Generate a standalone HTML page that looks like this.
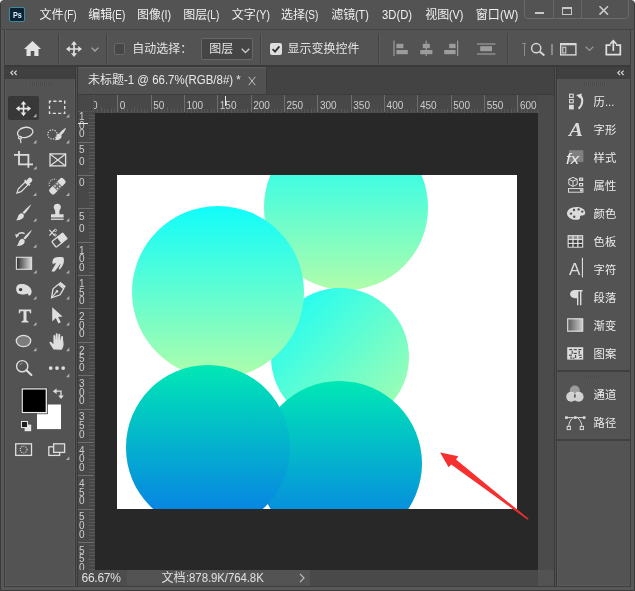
<!DOCTYPE html>
<html><head><meta charset="utf-8"><title>ps</title>
<style>
html,body{margin:0;padding:0;}
body{width:635px;height:591px;overflow:hidden;background:#535353;position:relative;font-family:"Liberation Sans",sans-serif;}
div,svg{position:absolute;box-sizing:border-box;}
.lb{white-space:nowrap;display:flex;align-items:center;}
.lb span.cj{font-family:"Liberation Sans","Noto Sans CJK SC",sans-serif;overflow:visible;}
.lb span{display:block;flex:none;}
.ab{position:absolute;}
</style></head><body>
<div id="root" style="left:0;top:0;width:635px;height:591px;will-change:transform;">
<div style="left:0;top:0;width:635px;height:591px;background:#585858;"></div><div style="left:0;top:3px;width:1px;height:588px;background:#3a3a3a;"></div><div style="left:634px;top:3px;width:1px;height:588px;background:#3a3a3a;"></div><div style="left:0;top:590px;width:635px;height:1px;background:#3c3c3c;"></div><div style="left:5px;top:0;width:625px;height:586px;background:#535353;"></div><div style="left:1px;top:0;width:633px;height:30px;background:#535353;"></div><div style="left:4px;top:30px;width:1px;height:557px;background:#3e3e3e;"></div><div style="left:630px;top:30px;width:1px;height:557px;background:#3e3e3e;"></div><div style="left:4px;top:586px;width:627px;height:1px;background:#3e3e3e;"></div><div style="left:5px;top:30px;width:1px;height:556px;background:#5b5b5b;"></div><div style="left:5px;top:585px;width:625px;height:1px;background:#5b5b5b;"></div><svg style="left:0;top:0;" width="4" height="4" viewBox="0 0 4 4"><path d="M0 0 L3.4 0 C1.4 0.4 0.4 1.4 0 3.4 Z" fill="#f4f4f4"/></svg><svg style="left:631px;top:0;" width="4" height="4" viewBox="0 0 4 4"><path d="M4 0 L0.6 0 C2.6 0.4 3.6 1.4 4 3.4 Z" fill="#f4f4f4"/></svg><div style="left:0;top:29px;width:635px;height:1px;background:#454545;"></div><div style="left:9px;top:7px;width:16px;height:15px;background:#0a2233;border:1px solid #3d8aa0;border-radius:2px;"></div><div class="lb" style="left:12.8px;top:8px;height:13px;line-height:13px;font-size:9.5px;font-weight:bold;color:#d6eefc;"><span style="transform:scaleX(0.76);transform-origin:0 50%;">Ps</span></div><div class="lb" style="left:39.5px;top:7.2px;height:16px;line-height:16px;font-size:12px;color:#efefef;"><span class="cj" style="width:24px;">文件</span><span style="transform:scaleX(0.82);transform-origin:0 50%;">(F)</span></div><div class="lb" style="left:88.3px;top:7.2px;height:16px;line-height:16px;font-size:12px;color:#efefef;"><span class="cj" style="width:24px;">编辑</span><span style="transform:scaleX(0.83);transform-origin:0 50%;">(E)</span></div><div class="lb" style="left:137px;top:7.2px;height:16px;line-height:16px;font-size:12px;color:#efefef;"><span class="cj" style="width:24px;">图像</span><span style="transform:scaleX(0.9);transform-origin:0 50%;">(I)</span></div><div class="lb" style="left:183.3px;top:7.2px;height:16px;line-height:16px;font-size:12px;color:#efefef;"><span class="cj" style="width:24px;">图层</span><span style="transform:scaleX(0.84);transform-origin:0 50%;">(L)</span></div><div class="lb" style="left:231.8px;top:7.2px;height:16px;line-height:16px;font-size:12px;color:#efefef;"><span class="cj" style="width:24px;">文字</span><span style="transform:scaleX(0.87);transform-origin:0 50%;">(Y)</span></div><div class="lb" style="left:281px;top:7.2px;height:16px;line-height:16px;font-size:12px;color:#efefef;"><span class="cj" style="width:24px;">选择</span><span style="transform:scaleX(0.83);transform-origin:0 50%;">(S)</span></div><div class="lb" style="left:331.3px;top:7.2px;height:16px;line-height:16px;font-size:12px;color:#efefef;"><span class="cj" style="width:24px;">滤镜</span><span style="transform:scaleX(0.9);transform-origin:0 50%;">(T)</span></div><div class="lb" style="left:381.6px;top:7.2px;height:16px;line-height:16px;font-size:12px;color:#efefef;"><span style="transform:scaleX(0.94);transform-origin:0 50%;">3D(D)</span></div><div class="lb" style="left:425.3px;top:7.2px;height:16px;line-height:16px;font-size:12px;color:#efefef;"><span class="cj" style="width:24px;">视图</span><span style="transform:scaleX(0.9);transform-origin:0 50%;">(V)</span></div><div class="lb" style="left:475.8px;top:7.2px;height:16px;line-height:16px;font-size:12px;color:#efefef;"><span class="cj" style="width:24px;">窗口</span><span style="transform:scaleX(0.95);transform-origin:0 50%;">(W)</span></div><div style="left:524px;top:-2px;width:105px;height:21px;border:1px solid #6a6a6a;border-radius:0 0 4px 4px;background:#535353;"></div><div style="left:553px;top:0;width:1px;height:18px;background:#676767;"></div><div style="left:581px;top:0;width:1px;height:18px;background:#676767;"></div><div style="left:535px;top:11.5px;width:9px;height:2px;background:#c8c8c8;"></div><div style="left:562px;top:7px;width:10px;height:8px;border:1.5px solid #c8c8c8;border-top-width:2px;"></div><svg style="left:598px;top:5px;" width="12" height="11" viewBox="0 0 12 11"><path d="M1.5 1.2 L10 9.6 M10 1.2 L1.5 9.6" stroke="#c8c8c8" stroke-width="1.6" fill="none"/></svg><div style="left:9px;top:35px;width:2px;height:28px;background:repeating-linear-gradient(#4a4a4a 0 1px,#5c5c5c 1px 2px);opacity:.8;"></div><div style="left:58px;top:34px;width:1px;height:29px;background:#434343;"></div><div style="left:59px;top:34px;width:1px;height:29px;background:#5b5b5b;"></div><div style="left:105.5px;top:34px;width:1px;height:29px;background:#434343;"></div><div style="left:106.5px;top:34px;width:1px;height:29px;background:#5b5b5b;"></div><div style="left:260px;top:34px;width:1px;height:29px;background:#434343;"></div><div style="left:261px;top:34px;width:1px;height:29px;background:#5b5b5b;"></div><div style="left:378px;top:34px;width:1px;height:29px;background:#434343;"></div><div style="left:379px;top:34px;width:1px;height:29px;background:#5b5b5b;"></div><div style="left:507px;top:34px;width:1px;height:29px;background:#434343;"></div><div style="left:508px;top:34px;width:1px;height:29px;background:#5b5b5b;"></div><svg style="left:24px;top:41px;" width="17" height="15" viewBox="0 0 17 15"><path d="M8.5 0 L17 8 L14.5 8 L14.5 15 L10.3 15 L10.3 10 L6.7 10 L6.7 15 L2.5 15 L2.5 8 L0 8 Z" fill="#e2e2e2"/></svg><svg style="left:65.5px;top:40.5px;" width="16" height="16" viewBox="0 0 16 16"><path d="M8 0 L11 3.8 L8.85 3.8 L8.85 7.15 L12.2 7.15 L12.2 5 L16 8 L12.2 11 L12.2 8.85 L8.85 8.85 L8.85 12.2 L11 12.2 L8 16 L5 12.2 L7.15 12.2 L7.15 8.85 L3.8 8.85 L3.8 11 L0 8 L3.8 5 L3.8 7.15 L7.15 7.15 L7.15 3.8 L5 3.8 Z" fill="#dedede"/></svg><svg style="left:90.5px;top:46.5px;" width="8" height="5" viewBox="0 0 8 5"><path d="M0.6 0.6 L4 4 L7.4 0.6" stroke="#a8a8a8" stroke-width="1.3" fill="none"/></svg><div style="left:113.5px;top:43px;width:11.5px;height:11.5px;background:#474747;border:1px solid #666;border-radius:2px;"></div><div class="lb" style="left:132.2px;top:41px;height:17px;line-height:17px;font-size:12px;color:#e4e4e4;"><span class="cj" style="width:60px;">自动选择：</span></div><div style="left:200.5px;top:38px;width:52px;height:22px;background:#454545;border:1px solid #686868;border-radius:2px;"></div><div class="lb" style="left:209.3px;top:41px;height:17px;line-height:17px;font-size:12px;color:#e4e4e4;"><span class="cj" style="width:24px;">图层</span></div><svg style="left:241px;top:47.5px;" width="9" height="6" viewBox="0 0 9 6"><path d="M0.7 0.7 L4.5 4.6 L8.3 0.7" stroke="#c4c4c4" stroke-width="1.4" fill="none"/></svg><div style="left:270px;top:43px;width:11.5px;height:11.5px;background:#dedede;border-radius:2px;"></div><svg style="left:270px;top:43px;" width="12" height="12" viewBox="0 0 12 12"><path d="M2.6 6.2 L5 8.6 L9.4 3.4" stroke="#333" stroke-width="1.8" fill="none"/></svg><div class="lb" style="left:287.6px;top:41px;height:17px;line-height:17px;font-size:12px;color:#e4e4e4;"><span class="cj" style="width:72px;">显示变换控件</span></div><svg style="left:393px;top:40px;" width="16" height="17" viewBox="0 0 16 17"><rect x="0.4" y="0.6" width="1.2" height="15.4" fill="#9c9c9c"/><rect x="3.4" y="3.8" width="7" height="4.4" fill="#9c9c9c"/><rect x="3.4" y="10" width="11.4" height="4.2" fill="#9c9c9c"/></svg><svg style="left:419px;top:40px;" width="16" height="17" viewBox="0 0 16 17"><rect x="6.6" y="0.6" width="1.2" height="15.4" fill="#9c9c9c"/><rect x="3.8" y="3.8" width="7" height="4.4" fill="#9c9c9c"/><rect x="1.2" y="10" width="12.2" height="4.2" fill="#9c9c9c"/></svg><svg style="left:443px;top:40px;" width="16" height="17" viewBox="0 0 16 17"><rect x="14" y="0.6" width="1.2" height="15.4" fill="#9c9c9c"/><rect x="6.2" y="3.8" width="6.4" height="4.4" fill="#9c9c9c"/><rect x="1.2" y="10" width="11.4" height="4.2" fill="#9c9c9c"/></svg><svg style="left:476px;top:40px;" width="20" height="17" viewBox="0 0 20 17"><rect x="1" y="3.4" width="18.4" height="1.2" fill="#9c9c9c"/><rect x="1" y="13.4" width="18.4" height="1.2" fill="#9c9c9c"/><rect x="4.2" y="6.2" width="11.8" height="5" fill="#9c9c9c"/></svg><div style="left:523.5px;top:43px;width:1px;height:13px;background:#8c8c8c;"></div><div style="left:522px;top:42.5px;width:4px;height:1px;background:#8c8c8c;"></div><svg style="left:530px;top:42px;" width="16" height="15" viewBox="0 0 16 15"><circle cx="6.2" cy="6.2" r="4.6" stroke="#d4d4d4" stroke-width="1.5" fill="none"/><path d="M9.6 9.6 L14.4 13.6" stroke="#d4d4d4" stroke-width="2" fill="none"/></svg><div style="left:551px;top:44px;width:2px;height:11px;background:#8a8a8a;"></div><svg style="left:560px;top:43px;" width="17" height="13" viewBox="0 0 17 13"><rect x="0.7" y="0.7" width="15.2" height="11.2" stroke="#d8d8d8" stroke-width="1.4" fill="none"/><rect x="0.7" y="0.7" width="15.2" height="1.6" fill="#d8d8d8"/><rect x="2.8" y="4.2" width="3" height="5.8" stroke="#d8d8d8" stroke-width="1" fill="none"/></svg><svg style="left:585px;top:46px;" width="9" height="6" viewBox="0 0 9 6"><path d="M0.6 0.6 L4.5 4.4 L8.4 0.6" stroke="#9a9a9a" stroke-width="1.3" fill="none"/></svg><svg style="left:605px;top:39px;" width="17" height="18" viewBox="0 0 17 18"><path d="M5.6 6.2 L1.3 6.2 L1.3 15.6 L15.3 15.6 L15.3 6.2 L11 6.2" stroke="#e0e0e0" stroke-width="1.7" fill="none"/><path d="M8.3 12 L8.3 2.6" stroke="#e0e0e0" stroke-width="1.7" fill="none"/><path d="M5.2 5 L8.3 1.6 L11.4 5" stroke="#e0e0e0" stroke-width="1.6" fill="none"/></svg><div style="left:5px;top:65.2px;width:625px;height:1.4px;background:#3a3a3a;"></div><div style="left:5px;top:67px;width:70px;height:12px;background:#404040;"></div><svg style="left:10.3px;top:70.2px;" width="8" height="6" viewBox="0 0 8 6"><path d="M3 0.6 L0.8 2.8 L3 5 M6.6 0.6 L4.4 2.8 L6.6 5" stroke="#d8d8d8" stroke-width="1.2" fill="none"/></svg><div style="left:74px;top:79px;width:1px;height:506px;background:#5a5a5a;"></div><div style="left:75px;top:67px;width:3px;height:519px;background:linear-gradient(90deg,#383838 0 1.1px,#525252 1.1px 2px,#383838 2px 3px);"></div><div style="left:30px;top:82px;width:21px;height:4px;background:repeating-linear-gradient(90deg,#4b4b4b 0 1px,#575757 1px 2px);"></div><div style="left:8px;top:96px;width:31px;height:24px;background:#383838;border-radius:2px;"></div><svg style="left:0;top:90px;" width="78" height="385" viewBox="0 90 78 385"><path transform="translate(15.9 101) scale(0.95)" d="M8 0 L11 3.8 L8.85 3.8 L8.85 7.15 L12.2 7.15 L12.2 5 L16 8 L12.2 11 L12.2 8.85 L8.85 8.85 L8.85 12.2 L11 12.2 L8 16 L5 12.2 L7.15 12.2 L7.15 8.85 L3.8 8.85 L3.8 11 L0 8 L3.8 5 L3.8 7.15 L7.15 7.15 L7.15 3.8 L5 3.8 Z" fill="#e6e6e6"/><path d="M36.5 113.6 L36.5 117.19999999999999 L33.2 117.19999999999999 Z" fill="#b0b0b0"/><rect x="49.5" y="101.2" width="15.2" height="12.2" fill="none" stroke="#dedede" stroke-width="1.4" stroke-dasharray="3.2 2.2" stroke-dashoffset="1.6"/><path d="M69.3 114 L69.3 117.6 L66 117.6 Z" fill="#b0b0b0"/><ellipse cx="25.2" cy="132.4" rx="7.8" ry="5" transform="rotate(-12 25.2 132.4)" fill="none" stroke="#dedede" stroke-width="1.3"/><path d="M19.2 136.2 C17.6 137.6 19 139.6 21 138.6 C22.4 137.8 21 136 19.8 136.6 M20.6 139 L20.9 143.2" fill="none" stroke="#dedede" stroke-width="1.2"/><path d="M36.5 139.8 L36.5 143.4 L33.2 143.4 Z" fill="#b0b0b0"/><circle cx="52.4" cy="134.4" r="4.6" fill="none" stroke="#dedede" stroke-width="1.3" stroke-dasharray="1.2 1.4"/><path d="M66.2 127.8 C65.2 130.6 63.2 133.6 61.2 135 L59.4 133.2 C61 131.2 63.6 129 66.2 127.8 Z" fill="#dedede"/><path d="M59.2 133.4 C61.8 134 62.2 136.6 60.8 138.2 C59.2 140 56.4 140.4 54.6 140 C56 139 56 137.6 56.4 136.2 C56.8 134.6 57.8 133.6 59.2 133.4 Z" fill="#dedede"/><path d="M69.3 139.8 L69.3 143.4 L66 143.4 Z" fill="#b0b0b0"/><path d="M19 151 L19 164.3 L33 164.3 M14 154.8 L28.4 154.8 L28.4 167.8" fill="none" stroke="#dedede" stroke-width="1.8"/><path d="M36.699999999999996 165.8 L36.699999999999996 169.4 L33.4 169.4 Z" fill="#b0b0b0"/><rect x="50" y="153.9" width="15.6" height="12" fill="none" stroke="#dedede" stroke-width="1.3"/><path d="M50 153.9 L65.6 165.9 M65.6 153.9 L50 165.9" stroke="#dedede" stroke-width="1.2" fill="none"/><g transform="translate(24 186) rotate(45)"><rect x="-2.3" y="-10.6" width="4.6" height="5.6" rx="2" fill="#dedede"/><rect x="-3.6" y="-5.6" width="7.2" height="2" fill="#dedede"/><path d="M-2 -3.6 L2 -3.6 L2 6 L0 10 L-2 6 Z" fill="none" stroke="#dedede" stroke-width="1.2"/></g><path d="M36.3 192.4 L36.3 196.0 L33 196.0 Z" fill="#b0b0b0"/><g transform="translate(57.4 186.2) rotate(-45)"><rect x="-9.6" y="-3.5" width="19.2" height="7" rx="2.4" fill="#dedede"/><rect x="-3.2" y="-3.5" width="6.4" height="7" fill="#6a6a6a"/><rect x="-2.4" y="-2.6" width="1.6" height="1.6" fill="#dedede"/><rect x="0.8" y="-2.6" width="1.6" height="1.6" fill="#dedede"/><rect x="-2.4" y="1" width="1.6" height="1.6" fill="#dedede"/><rect x="0.8" y="1" width="1.6" height="1.6" fill="#dedede"/></g><path d="M49.4 186 A5.2 5.2 0 0 1 56.4 179.6" fill="none" stroke="#dedede" stroke-width="1.1" stroke-dasharray="1 1.3"/><path d="M69.3 192.4 L69.3 196.0 L66 196.0 Z" fill="#b0b0b0"/><g transform="translate(0 0)"><path d="M31.4 204.2 C29.6 207.6 26.8 211.4 24.2 214 L22.6 212.6 C24.8 209.8 28.4 206.4 31.4 204.2 Z" fill="#dedede"/><path d="M22.2 213.2 L23.8 214.8 C24.4 217 22.8 219 20.6 219.6 C18.8 220.2 17 220.4 15.8 220.4 C17.4 219.2 17.6 217.8 18 216.4 C18.6 214.4 20.2 213 22.2 213.2 Z" fill="#dedede"/></g><path d="M36.5 218 L36.5 221.6 L33.2 221.6 Z" fill="#b0b0b0"/><path d="M57.3 203.8 C59.6 203.8 60.9 205.4 60.9 207.2 C60.9 208.8 59.6 209.8 59.4 211 L59.4 214.2 L63.6 214.2 L63.6 217.4 L51 217.4 L51 214.2 L55.2 214.2 L55.2 211 C55 209.8 53.7 208.8 53.7 207.2 C53.7 205.4 55 203.8 57.3 203.8 Z" fill="#dedede"/><rect x="51" y="218.6" width="12.6" height="1.3" fill="#dedede"/><path d="M69.3 218 L69.3 221.6 L66 221.6 Z" fill="#b0b0b0"/><g transform="translate(0.8 25.6)"><path d="M31.4 204.2 C29.6 207.6 26.8 211.4 24.2 214 L22.6 212.6 C24.8 209.8 28.4 206.4 31.4 204.2 Z" fill="#dedede"/><path d="M22.2 213.2 L23.8 214.8 C24.4 217 22.8 219 20.6 219.6 C18.8 220.2 17 220.4 15.8 220.4 C17.4 219.2 17.6 217.8 18 216.4 C18.6 214.4 20.2 213 22.2 213.2 Z" fill="#dedede"/></g><path d="M24.6 233.6 C21.6 232.2 18.6 233 17 235.6" fill="none" stroke="#dedede" stroke-width="1.3"/><path d="M15.2 234 L19 235.2 L16.2 238 Z" fill="#dedede"/><path d="M36.5 244.2 L36.5 247.79999999999998 L33.2 247.79999999999998 Z" fill="#b0b0b0"/><g transform="translate(59.6 240) rotate(-38)"><rect x="-7.2" y="-3.6" width="9" height="7.2" rx="1" fill="none" stroke="#dedede" stroke-width="1.3"/><rect x="-0.6" y="-4.2" width="8" height="8.4" rx="1" fill="#dedede"/></g><path d="M49.4 229.8 L54.6 235.6 M54.6 229.8 L49.4 235.6" stroke="#dedede" stroke-width="1.2" fill="none"/><circle cx="55.4" cy="230.4" r="1.1" fill="none" stroke="#dedede" stroke-width="0.9"/><circle cx="55.2" cy="235" r="1.1" fill="none" stroke="#dedede" stroke-width="0.9"/><path d="M69.3 244.2 L69.3 247.79999999999998 L66 247.79999999999998 Z" fill="#b0b0b0"/><defs><linearGradient id="gt" x1="0" x2="1" y1="0" y2="0"><stop offset="0" stop-color="#2e2e2e"/><stop offset="1" stop-color="#dcdcdc"/></linearGradient></defs><rect x="16.4" y="257.3" width="15.2" height="12" fill="url(#gt)" stroke="#dedede" stroke-width="1.1"/><path d="M36.699999999999996 270 L36.699999999999996 273.6 L33.4 273.6 Z" fill="#b0b0b0"/><path d="M54.2 258 C56.6 256.8 61 256.8 63.4 257.4 C64.4 259.6 64 263 62.6 265.6 C61.8 267.2 60.6 268.8 59.6 269.6 L58.6 268.6 C59.6 267 60.4 265.2 60.6 263.6 C59.4 265.2 57 268.6 54.6 271.6 L51.4 271.6 C52.6 269 54.8 265.4 56.2 263 C55 263.6 53.6 264 52.6 263.8 C52 261.6 52.8 259.2 54.2 258 Z" fill="#dedede"/><path d="M69.3 270 L69.3 273.6 L66 273.6 Z" fill="#b0b0b0"/><path d="M17.2 285.4 C19.4 283.4 24 283.6 27.4 285.4 C30.6 287.2 32.4 290.2 31.4 293.2 C30.8 295 29.6 295.8 28.6 295.4 L27.6 293.4 C25.4 294.6 21.4 295 18.8 293.8 C16 292.4 15.4 287.4 17.2 285.4 Z" fill="#dedede"/><circle cx="20.6" cy="289.6" r="1.7" fill="#3a3a3a"/><path d="M36.5 296 L36.5 299.6 L33.2 299.6 Z" fill="#b0b0b0"/><g transform="translate(57.6 290.6) rotate(40)"><path d="M-3.6 -8.6 L3.6 -8.6 L3.6 -6 L-3.6 -6 Z" fill="#dedede"/><path d="M-3.4 -5.4 L3.4 -5.4 L4.6 1.6 L0 9.4 L-4.6 1.6 Z" fill="none" stroke="#dedede" stroke-width="1.3"/><path d="M0 9 L0 2" stroke="#dedede" stroke-width="1.1"/><circle cx="0" cy="1" r="1.3" fill="#dedede"/></g><path d="M69.3 296 L69.3 299.6 L66 299.6 Z" fill="#b0b0b0"/><path d="M18.8 309.4 L31.2 309.4 L31.2 313.2 L30 313.2 L29.4 311.2 L26.5 311.2 L26.5 320.6 L28.4 321.2 L28.4 322.6 L21.6 322.6 L21.6 321.2 L23.5 320.6 L23.5 311.2 L20.6 311.2 L20 313.2 L18.8 313.2 Z" fill="#dedede"/><path d="M36.5 322 L36.5 325.6 L33.2 325.6 Z" fill="#b0b0b0"/><path d="M52.2 307.2 L52.2 321.6 L55.8 318 L58.4 323.4 L60.8 322.2 L58.2 317 L62.6 316.6 Z" fill="#dedede"/><path d="M69.3 322 L69.3 325.6 L66 325.6 Z" fill="#b0b0b0"/><ellipse cx="23.5" cy="341" rx="7.2" ry="5.6" fill="#7c7c7c" stroke="#dedede" stroke-width="1.3"/><path d="M36.5 347.6 L36.5 351.20000000000005 L33.2 351.20000000000005 Z" fill="#b0b0b0"/><path d="M53.6 349.6 C52.2 347.4 50.8 345 49.6 343.2 C49.2 342.2 50.4 341.4 51.4 342.2 L53.4 344.2 L53.4 335.8 C53.4 334.6 55.2 334.6 55.2 335.8 L55.4 340.6 L55.8 334.2 C55.8 333 57.7 333 57.7 334.2 L57.8 340.6 L58.4 334.6 C58.5 333.4 60.3 333.5 60.3 334.7 L60.2 341 L61.2 336.6 C61.5 335.5 63.2 335.8 63 337 C62.8 339.8 63.6 342 63.6 344.2 C63.6 346.4 62.6 348.4 61.6 349.8 Z" fill="#dedede"/><path d="M69.3 347.6 L69.3 351.20000000000005 L66 351.20000000000005 Z" fill="#b0b0b0"/><circle cx="22.2" cy="366.2" r="5.6" fill="none" stroke="#dedede" stroke-width="1.4"/><path d="M26.4 370.2 L31.4 375" stroke="#dedede" stroke-width="2.1" stroke-linecap="round"/><path d="M19.6 365.4 A3 3 0 0 1 22.6 363.2" fill="none" stroke="#9a9a9a" stroke-width="0.9"/><circle cx="50.7" cy="368.1" r="1.9" fill="#dedede"/><circle cx="57" cy="368.1" r="1.9" fill="#dedede"/><circle cx="63.2" cy="368.1" r="1.9" fill="#dedede"/><path d="M69.3 373.6 L69.3 377.20000000000005 L66 377.20000000000005 Z" fill="#b0b0b0"/><rect x="37" y="404.5" width="24" height="24.6" fill="#ffffff"/><rect x="22.2" y="388.9" width="24.1" height="23.7" fill="#000" stroke="#ececec" stroke-width="1.3"/><rect x="21" y="387.7" width="26.5" height="26.1" fill="none" stroke="#454545" stroke-width="0.8"/><path d="M56 391.2 L61 391.2 L61 396" fill="none" stroke="#dedede" stroke-width="1.3"/><path d="M52.8 391.2 L56.6 388.4 L56.6 394 Z" fill="#dedede"/><path d="M61 399 L58.2 395.4 L63.8 395.4 Z" fill="#dedede"/><rect x="24.6" y="424.6" width="6.6" height="6.6" fill="#e4e4e4"/><rect x="21.5" y="421.5" width="6" height="6" fill="#1c1c1c" stroke="#e4e4e4" stroke-width="1"/><rect x="15.7" y="443.8" width="15.8" height="11.6" fill="none" stroke="#dedede" stroke-width="1.3"/><circle cx="23.6" cy="449.6" r="3.4" fill="none" stroke="#dedede" stroke-width="1.1" stroke-dasharray="1 1.2"/><rect x="48.8" y="446.8" width="10.8" height="8.6" fill="none" stroke="#dedede" stroke-width="1.3"/><rect x="53.6" y="443.8" width="11" height="8.6" fill="#626262" stroke="#dedede" stroke-width="1.3"/><path d="M69.3 456.4 L69.3 460.0 L66 460.0 Z" fill="#b0b0b0"/></svg><div style="left:78px;top:67px;width:476px;height:28px;background:#434343;"></div><div style="left:78px;top:66.6px;width:187.5px;height:28.4px;background:#515151;border-top:1px solid #5c5c5c;"></div><div class="lb" style="left:88px;top:72px;height:17px;line-height:17px;font-size:12px;color:#e8e8e8;"><span class="cj" style="width:36px;">未标题</span><span style="transform:scaleX(0.955);transform-origin:0 50%;">-1 @ 66.7%(RGB/8#) *</span></div><svg style="left:248px;top:75.5px;" width="8" height="10" viewBox="0 0 8 10"><path d="M0.7 0.8 L7.3 9.2 M7.3 0.8 L0.7 9.2" stroke="#c4c4c4" stroke-width="1" fill="none"/></svg><div style="left:265.5px;top:67px;width:1px;height:27px;background:#3c3c3c;"></div><div style="left:78px;top:93.6px;width:476px;height:1.6px;background:#3c3c3c;"></div><div style="left:94px;top:112px;width:443.5px;height:458px;background:#282828;"></div><div style="left:537.5px;top:95px;width:16.5px;height:475px;background:#4b4b4b;"></div><div style="left:78px;top:570px;width:476px;height:16px;background:#494949;"></div><div style="left:538px;top:570px;width:16px;height:16px;background:#535353;"></div><div style="left:554px;top:67px;width:3px;height:519px;background:linear-gradient(90deg,#383838 0 1px,#525252 1px 2px,#383838 2px 3px);"></div><div style="left:557px;top:79px;width:1px;height:506px;background:#5a5a5a;"></div><div style="left:78px;top:95px;width:460px;height:17.5px;background:#484848;overflow:hidden;" id="hr"><div style="left:-24.9px;top:5.4px;font-size:10px;line-height:11px;height:11px;color:#cdcdcd;">100</div><div style="left:19.2px;top:13.5px;width:1px;height:4px;background:#595959;"></div><div style="left:22.5px;top:11.5px;width:1px;height:6px;background:#595959;"></div><div style="left:25.9px;top:13.5px;width:1px;height:4px;background:#595959;"></div><div style="left:29.2px;top:13.5px;width:1px;height:4px;background:#595959;"></div><div style="left:32.5px;top:13.5px;width:1px;height:4px;background:#595959;"></div><div style="left:35.9px;top:13.5px;width:1px;height:4px;background:#595959;"></div><div style="left:8.5px;top:5.4px;font-size:10px;line-height:11px;height:11px;color:#cdcdcd;">50</div><div style="left:39.2px;top:0;width:1px;height:17px;background:#6e6e6e;"></div><div style="left:42.5px;top:13.5px;width:1px;height:4px;background:#595959;"></div><div style="left:45.9px;top:13.5px;width:1px;height:4px;background:#595959;"></div><div style="left:49.2px;top:13.5px;width:1px;height:4px;background:#595959;"></div><div style="left:52.5px;top:13.5px;width:1px;height:4px;background:#595959;"></div><div style="left:55.9px;top:11.5px;width:1px;height:6px;background:#595959;"></div><div style="left:59.2px;top:13.5px;width:1px;height:4px;background:#595959;"></div><div style="left:62.5px;top:13.5px;width:1px;height:4px;background:#595959;"></div><div style="left:65.9px;top:13.5px;width:1px;height:4px;background:#595959;"></div><div style="left:69.2px;top:13.5px;width:1px;height:4px;background:#595959;"></div><div style="left:41.8px;top:5.4px;font-size:10px;line-height:11px;height:11px;color:#cdcdcd;">0</div><div style="left:72.6px;top:0;width:1px;height:17px;background:#6e6e6e;"></div><div style="left:75.9px;top:13.5px;width:1px;height:4px;background:#595959;"></div><div style="left:79.2px;top:13.5px;width:1px;height:4px;background:#595959;"></div><div style="left:82.6px;top:13.5px;width:1px;height:4px;background:#595959;"></div><div style="left:85.9px;top:13.5px;width:1px;height:4px;background:#595959;"></div><div style="left:89.2px;top:11.5px;width:1px;height:6px;background:#595959;"></div><div style="left:92.6px;top:13.5px;width:1px;height:4px;background:#595959;"></div><div style="left:95.9px;top:13.5px;width:1px;height:4px;background:#595959;"></div><div style="left:99.2px;top:13.5px;width:1px;height:4px;background:#595959;"></div><div style="left:102.6px;top:13.5px;width:1px;height:4px;background:#595959;"></div><div style="left:75.2px;top:5.4px;font-size:10px;line-height:11px;height:11px;color:#cdcdcd;">50</div><div style="left:105.9px;top:0;width:1px;height:17px;background:#6e6e6e;"></div><div style="left:109.2px;top:13.5px;width:1px;height:4px;background:#595959;"></div><div style="left:112.6px;top:13.5px;width:1px;height:4px;background:#595959;"></div><div style="left:115.9px;top:13.5px;width:1px;height:4px;background:#595959;"></div><div style="left:119.2px;top:13.5px;width:1px;height:4px;background:#595959;"></div><div style="left:122.6px;top:11.5px;width:1px;height:6px;background:#595959;"></div><div style="left:125.9px;top:13.5px;width:1px;height:4px;background:#595959;"></div><div style="left:129.2px;top:13.5px;width:1px;height:4px;background:#595959;"></div><div style="left:132.6px;top:13.5px;width:1px;height:4px;background:#595959;"></div><div style="left:135.9px;top:13.5px;width:1px;height:4px;background:#595959;"></div><div style="left:108.5px;top:5.4px;font-size:10px;line-height:11px;height:11px;color:#cdcdcd;">100</div><div style="left:139.2px;top:0;width:1px;height:17px;background:#6e6e6e;"></div><div style="left:142.6px;top:13.5px;width:1px;height:4px;background:#595959;"></div><div style="left:145.9px;top:13.5px;width:1px;height:4px;background:#595959;"></div><div style="left:149.3px;top:13.5px;width:1px;height:4px;background:#595959;"></div><div style="left:152.6px;top:13.5px;width:1px;height:4px;background:#595959;"></div><div style="left:155.9px;top:11.5px;width:1px;height:6px;background:#595959;"></div><div style="left:159.3px;top:13.5px;width:1px;height:4px;background:#595959;"></div><div style="left:162.6px;top:13.5px;width:1px;height:4px;background:#595959;"></div><div style="left:165.9px;top:13.5px;width:1px;height:4px;background:#595959;"></div><div style="left:169.3px;top:13.5px;width:1px;height:4px;background:#595959;"></div><div style="left:141.8px;top:5.4px;font-size:10px;line-height:11px;height:11px;color:#cdcdcd;">150</div><div style="left:172.6px;top:0;width:1px;height:17px;background:#6e6e6e;"></div><div style="left:175.9px;top:13.5px;width:1px;height:4px;background:#595959;"></div><div style="left:179.3px;top:13.5px;width:1px;height:4px;background:#595959;"></div><div style="left:182.6px;top:13.5px;width:1px;height:4px;background:#595959;"></div><div style="left:185.9px;top:13.5px;width:1px;height:4px;background:#595959;"></div><div style="left:189.3px;top:11.5px;width:1px;height:6px;background:#595959;"></div><div style="left:192.6px;top:13.5px;width:1px;height:4px;background:#595959;"></div><div style="left:195.9px;top:13.5px;width:1px;height:4px;background:#595959;"></div><div style="left:199.3px;top:13.5px;width:1px;height:4px;background:#595959;"></div><div style="left:202.6px;top:13.5px;width:1px;height:4px;background:#595959;"></div><div style="left:175.2px;top:5.4px;font-size:10px;line-height:11px;height:11px;color:#cdcdcd;">200</div><div style="left:205.9px;top:0;width:1px;height:17px;background:#6e6e6e;"></div><div style="left:209.3px;top:13.5px;width:1px;height:4px;background:#595959;"></div><div style="left:212.6px;top:13.5px;width:1px;height:4px;background:#595959;"></div><div style="left:216.0px;top:13.5px;width:1px;height:4px;background:#595959;"></div><div style="left:219.3px;top:13.5px;width:1px;height:4px;background:#595959;"></div><div style="left:222.6px;top:11.5px;width:1px;height:6px;background:#595959;"></div><div style="left:226.0px;top:13.5px;width:1px;height:4px;background:#595959;"></div><div style="left:229.3px;top:13.5px;width:1px;height:4px;background:#595959;"></div><div style="left:232.6px;top:13.5px;width:1px;height:4px;background:#595959;"></div><div style="left:236.0px;top:13.5px;width:1px;height:4px;background:#595959;"></div><div style="left:208.5px;top:5.4px;font-size:10px;line-height:11px;height:11px;color:#cdcdcd;">250</div><div style="left:239.3px;top:0;width:1px;height:17px;background:#6e6e6e;"></div><div style="left:242.6px;top:13.5px;width:1px;height:4px;background:#595959;"></div><div style="left:246.0px;top:13.5px;width:1px;height:4px;background:#595959;"></div><div style="left:249.3px;top:13.5px;width:1px;height:4px;background:#595959;"></div><div style="left:252.6px;top:13.5px;width:1px;height:4px;background:#595959;"></div><div style="left:256.0px;top:11.5px;width:1px;height:6px;background:#595959;"></div><div style="left:259.3px;top:13.5px;width:1px;height:4px;background:#595959;"></div><div style="left:262.6px;top:13.5px;width:1px;height:4px;background:#595959;"></div><div style="left:266.0px;top:13.5px;width:1px;height:4px;background:#595959;"></div><div style="left:269.3px;top:13.5px;width:1px;height:4px;background:#595959;"></div><div style="left:241.9px;top:5.4px;font-size:10px;line-height:11px;height:11px;color:#cdcdcd;">300</div><div style="left:272.7px;top:0;width:1px;height:17px;background:#6e6e6e;"></div><div style="left:276.0px;top:13.5px;width:1px;height:4px;background:#595959;"></div><div style="left:279.3px;top:13.5px;width:1px;height:4px;background:#595959;"></div><div style="left:282.7px;top:13.5px;width:1px;height:4px;background:#595959;"></div><div style="left:286.0px;top:13.5px;width:1px;height:4px;background:#595959;"></div><div style="left:289.3px;top:11.5px;width:1px;height:6px;background:#595959;"></div><div style="left:292.7px;top:13.5px;width:1px;height:4px;background:#595959;"></div><div style="left:296.0px;top:13.5px;width:1px;height:4px;background:#595959;"></div><div style="left:299.3px;top:13.5px;width:1px;height:4px;background:#595959;"></div><div style="left:302.7px;top:13.5px;width:1px;height:4px;background:#595959;"></div><div style="left:275.3px;top:5.4px;font-size:10px;line-height:11px;height:11px;color:#cdcdcd;">350</div><div style="left:306.0px;top:0;width:1px;height:17px;background:#6e6e6e;"></div><div style="left:309.3px;top:13.5px;width:1px;height:4px;background:#595959;"></div><div style="left:312.7px;top:13.5px;width:1px;height:4px;background:#595959;"></div><div style="left:316.0px;top:13.5px;width:1px;height:4px;background:#595959;"></div><div style="left:319.3px;top:13.5px;width:1px;height:4px;background:#595959;"></div><div style="left:322.7px;top:11.5px;width:1px;height:6px;background:#595959;"></div><div style="left:326.0px;top:13.5px;width:1px;height:4px;background:#595959;"></div><div style="left:329.3px;top:13.5px;width:1px;height:4px;background:#595959;"></div><div style="left:332.7px;top:13.5px;width:1px;height:4px;background:#595959;"></div><div style="left:336.0px;top:13.5px;width:1px;height:4px;background:#595959;"></div><div style="left:308.6px;top:5.4px;font-size:10px;line-height:11px;height:11px;color:#cdcdcd;">400</div><div style="left:339.4px;top:0;width:1px;height:17px;background:#6e6e6e;"></div><div style="left:342.7px;top:13.5px;width:1px;height:4px;background:#595959;"></div><div style="left:346.0px;top:13.5px;width:1px;height:4px;background:#595959;"></div><div style="left:349.4px;top:13.5px;width:1px;height:4px;background:#595959;"></div><div style="left:352.7px;top:13.5px;width:1px;height:4px;background:#595959;"></div><div style="left:356.0px;top:11.5px;width:1px;height:6px;background:#595959;"></div><div style="left:359.4px;top:13.5px;width:1px;height:4px;background:#595959;"></div><div style="left:362.7px;top:13.5px;width:1px;height:4px;background:#595959;"></div><div style="left:366.0px;top:13.5px;width:1px;height:4px;background:#595959;"></div><div style="left:369.4px;top:13.5px;width:1px;height:4px;background:#595959;"></div><div style="left:342.0px;top:5.4px;font-size:10px;line-height:11px;height:11px;color:#cdcdcd;">450</div><div style="left:372.7px;top:0;width:1px;height:17px;background:#6e6e6e;"></div><div style="left:376.0px;top:13.5px;width:1px;height:4px;background:#595959;"></div><div style="left:379.4px;top:13.5px;width:1px;height:4px;background:#595959;"></div><div style="left:382.7px;top:13.5px;width:1px;height:4px;background:#595959;"></div><div style="left:386.0px;top:13.5px;width:1px;height:4px;background:#595959;"></div><div style="left:389.4px;top:11.5px;width:1px;height:6px;background:#595959;"></div><div style="left:392.7px;top:13.5px;width:1px;height:4px;background:#595959;"></div><div style="left:396.0px;top:13.5px;width:1px;height:4px;background:#595959;"></div><div style="left:399.4px;top:13.5px;width:1px;height:4px;background:#595959;"></div><div style="left:402.7px;top:13.5px;width:1px;height:4px;background:#595959;"></div><div style="left:375.3px;top:5.4px;font-size:10px;line-height:11px;height:11px;color:#cdcdcd;">500</div><div style="left:406.1px;top:0;width:1px;height:17px;background:#6e6e6e;"></div><div style="left:409.4px;top:13.5px;width:1px;height:4px;background:#595959;"></div><div style="left:412.7px;top:13.5px;width:1px;height:4px;background:#595959;"></div><div style="left:416.1px;top:13.5px;width:1px;height:4px;background:#595959;"></div><div style="left:419.4px;top:13.5px;width:1px;height:4px;background:#595959;"></div><div style="left:422.7px;top:11.5px;width:1px;height:6px;background:#595959;"></div><div style="left:426.1px;top:13.5px;width:1px;height:4px;background:#595959;"></div><div style="left:429.4px;top:13.5px;width:1px;height:4px;background:#595959;"></div><div style="left:432.7px;top:13.5px;width:1px;height:4px;background:#595959;"></div><div style="left:436.1px;top:13.5px;width:1px;height:4px;background:#595959;"></div><div style="left:408.7px;top:5.4px;font-size:10px;line-height:11px;height:11px;color:#cdcdcd;">550</div><div style="left:439.4px;top:0;width:1px;height:17px;background:#6e6e6e;"></div><div style="left:442.7px;top:13.5px;width:1px;height:4px;background:#595959;"></div><div style="left:446.1px;top:13.5px;width:1px;height:4px;background:#595959;"></div><div style="left:449.4px;top:13.5px;width:1px;height:4px;background:#595959;"></div><div style="left:452.7px;top:13.5px;width:1px;height:4px;background:#595959;"></div><div style="left:456.1px;top:11.5px;width:1px;height:6px;background:#595959;"></div><div style="left:459.4px;top:13.5px;width:1px;height:4px;background:#595959;"></div><div style="left:442.0px;top:5.4px;font-size:10px;line-height:11px;height:11px;color:#cdcdcd;">600</div></div><div style="left:78px;top:112px;width:16.5px;height:458px;background:#484848;overflow:hidden;" id="vr"><div style="left:11.0px;top:3.0px;width:5.5px;height:1px;background:#595959;"></div><div style="left:11.0px;top:6.3px;width:5.5px;height:1px;background:#595959;"></div><div style="left:11.0px;top:9.6px;width:5.5px;height:1px;background:#595959;"></div><div style="left:9.5px;top:13.0px;width:7px;height:1px;background:#595959;"></div><div style="left:11.0px;top:16.3px;width:5.5px;height:1px;background:#595959;"></div><div style="left:11.0px;top:19.6px;width:5.5px;height:1px;background:#595959;"></div><div style="left:11.0px;top:23.0px;width:5.5px;height:1px;background:#595959;"></div><div style="left:11.0px;top:26.3px;width:5.5px;height:1px;background:#595959;"></div><div style="left:1px;top:-0.9px;font-size:10px;line-height:11px;height:11px;color:#cdcdcd;">1</div><div style="left:1px;top:7.7px;font-size:10px;line-height:11px;height:11px;color:#cdcdcd;">0</div><div style="left:1px;top:16.3px;font-size:10px;line-height:11px;height:11px;color:#cdcdcd;">0</div><div style="left:0;top:29.6px;width:16px;height:1px;background:#6e6e6e;"></div><div style="left:11.0px;top:33.0px;width:5.5px;height:1px;background:#595959;"></div><div style="left:11.0px;top:36.3px;width:5.5px;height:1px;background:#595959;"></div><div style="left:11.0px;top:39.7px;width:5.5px;height:1px;background:#595959;"></div><div style="left:11.0px;top:43.0px;width:5.5px;height:1px;background:#595959;"></div><div style="left:9.5px;top:46.3px;width:7px;height:1px;background:#595959;"></div><div style="left:11.0px;top:49.7px;width:5.5px;height:1px;background:#595959;"></div><div style="left:11.0px;top:53.0px;width:5.5px;height:1px;background:#595959;"></div><div style="left:11.0px;top:56.3px;width:5.5px;height:1px;background:#595959;"></div><div style="left:11.0px;top:59.7px;width:5.5px;height:1px;background:#595959;"></div><div style="left:1px;top:31.8px;font-size:10px;line-height:11px;height:11px;color:#cdcdcd;">5</div><div style="left:1px;top:43.8px;font-size:10px;line-height:11px;height:11px;color:#cdcdcd;">0</div><div style="left:0;top:63.0px;width:16px;height:1px;background:#6e6e6e;"></div><div style="left:11.0px;top:66.3px;width:5.5px;height:1px;background:#595959;"></div><div style="left:11.0px;top:69.7px;width:5.5px;height:1px;background:#595959;"></div><div style="left:11.0px;top:73.0px;width:5.5px;height:1px;background:#595959;"></div><div style="left:11.0px;top:76.3px;width:5.5px;height:1px;background:#595959;"></div><div style="left:9.5px;top:79.7px;width:7px;height:1px;background:#595959;"></div><div style="left:11.0px;top:83.0px;width:5.5px;height:1px;background:#595959;"></div><div style="left:11.0px;top:86.3px;width:5.5px;height:1px;background:#595959;"></div><div style="left:11.0px;top:89.7px;width:5.5px;height:1px;background:#595959;"></div><div style="left:11.0px;top:93.0px;width:5.5px;height:1px;background:#595959;"></div><div style="left:1px;top:65.4px;font-size:10px;line-height:11px;height:11px;color:#cdcdcd;">0</div><div style="left:0;top:96.3px;width:16px;height:1px;background:#6e6e6e;"></div><div style="left:11.0px;top:99.7px;width:5.5px;height:1px;background:#595959;"></div><div style="left:11.0px;top:103.0px;width:5.5px;height:1px;background:#595959;"></div><div style="left:11.0px;top:106.4px;width:5.5px;height:1px;background:#595959;"></div><div style="left:11.0px;top:109.7px;width:5.5px;height:1px;background:#595959;"></div><div style="left:9.5px;top:113.0px;width:7px;height:1px;background:#595959;"></div><div style="left:11.0px;top:116.4px;width:5.5px;height:1px;background:#595959;"></div><div style="left:11.0px;top:119.7px;width:5.5px;height:1px;background:#595959;"></div><div style="left:11.0px;top:123.0px;width:5.5px;height:1px;background:#595959;"></div><div style="left:11.0px;top:126.4px;width:5.5px;height:1px;background:#595959;"></div><div style="left:1px;top:98.5px;font-size:10px;line-height:11px;height:11px;color:#cdcdcd;">5</div><div style="left:1px;top:110.5px;font-size:10px;line-height:11px;height:11px;color:#cdcdcd;">0</div><div style="left:0;top:129.7px;width:16px;height:1px;background:#6e6e6e;"></div><div style="left:11.0px;top:133.0px;width:5.5px;height:1px;background:#595959;"></div><div style="left:11.0px;top:136.4px;width:5.5px;height:1px;background:#595959;"></div><div style="left:11.0px;top:139.7px;width:5.5px;height:1px;background:#595959;"></div><div style="left:11.0px;top:143.0px;width:5.5px;height:1px;background:#595959;"></div><div style="left:9.5px;top:146.4px;width:7px;height:1px;background:#595959;"></div><div style="left:11.0px;top:149.7px;width:5.5px;height:1px;background:#595959;"></div><div style="left:11.0px;top:153.0px;width:5.5px;height:1px;background:#595959;"></div><div style="left:11.0px;top:156.4px;width:5.5px;height:1px;background:#595959;"></div><div style="left:11.0px;top:159.7px;width:5.5px;height:1px;background:#595959;"></div><div style="left:1px;top:132.5px;font-size:10px;line-height:11px;height:11px;color:#cdcdcd;">1</div><div style="left:1px;top:141.1px;font-size:10px;line-height:11px;height:11px;color:#cdcdcd;">0</div><div style="left:1px;top:149.7px;font-size:10px;line-height:11px;height:11px;color:#cdcdcd;">0</div><div style="left:0;top:163.1px;width:16px;height:1px;background:#6e6e6e;"></div><div style="left:11.0px;top:166.4px;width:5.5px;height:1px;background:#595959;"></div><div style="left:11.0px;top:169.7px;width:5.5px;height:1px;background:#595959;"></div><div style="left:11.0px;top:173.1px;width:5.5px;height:1px;background:#595959;"></div><div style="left:11.0px;top:176.4px;width:5.5px;height:1px;background:#595959;"></div><div style="left:9.5px;top:179.7px;width:7px;height:1px;background:#595959;"></div><div style="left:11.0px;top:183.1px;width:5.5px;height:1px;background:#595959;"></div><div style="left:11.0px;top:186.4px;width:5.5px;height:1px;background:#595959;"></div><div style="left:11.0px;top:189.7px;width:5.5px;height:1px;background:#595959;"></div><div style="left:11.0px;top:193.1px;width:5.5px;height:1px;background:#595959;"></div><div style="left:1px;top:165.9px;font-size:10px;line-height:11px;height:11px;color:#cdcdcd;">1</div><div style="left:1px;top:174.5px;font-size:10px;line-height:11px;height:11px;color:#cdcdcd;">5</div><div style="left:1px;top:183.1px;font-size:10px;line-height:11px;height:11px;color:#cdcdcd;">0</div><div style="left:0;top:196.4px;width:16px;height:1px;background:#6e6e6e;"></div><div style="left:11.0px;top:199.7px;width:5.5px;height:1px;background:#595959;"></div><div style="left:11.0px;top:203.1px;width:5.5px;height:1px;background:#595959;"></div><div style="left:11.0px;top:206.4px;width:5.5px;height:1px;background:#595959;"></div><div style="left:11.0px;top:209.7px;width:5.5px;height:1px;background:#595959;"></div><div style="left:9.5px;top:213.1px;width:7px;height:1px;background:#595959;"></div><div style="left:11.0px;top:216.4px;width:5.5px;height:1px;background:#595959;"></div><div style="left:11.0px;top:219.7px;width:5.5px;height:1px;background:#595959;"></div><div style="left:11.0px;top:223.1px;width:5.5px;height:1px;background:#595959;"></div><div style="left:11.0px;top:226.4px;width:5.5px;height:1px;background:#595959;"></div><div style="left:1px;top:199.2px;font-size:10px;line-height:11px;height:11px;color:#cdcdcd;">2</div><div style="left:1px;top:207.8px;font-size:10px;line-height:11px;height:11px;color:#cdcdcd;">0</div><div style="left:1px;top:216.4px;font-size:10px;line-height:11px;height:11px;color:#cdcdcd;">0</div><div style="left:0;top:229.8px;width:16px;height:1px;background:#6e6e6e;"></div><div style="left:11.0px;top:233.1px;width:5.5px;height:1px;background:#595959;"></div><div style="left:11.0px;top:236.4px;width:5.5px;height:1px;background:#595959;"></div><div style="left:11.0px;top:239.8px;width:5.5px;height:1px;background:#595959;"></div><div style="left:11.0px;top:243.1px;width:5.5px;height:1px;background:#595959;"></div><div style="left:9.5px;top:246.4px;width:7px;height:1px;background:#595959;"></div><div style="left:11.0px;top:249.8px;width:5.5px;height:1px;background:#595959;"></div><div style="left:11.0px;top:253.1px;width:5.5px;height:1px;background:#595959;"></div><div style="left:11.0px;top:256.4px;width:5.5px;height:1px;background:#595959;"></div><div style="left:11.0px;top:259.8px;width:5.5px;height:1px;background:#595959;"></div><div style="left:1px;top:232.6px;font-size:10px;line-height:11px;height:11px;color:#cdcdcd;">2</div><div style="left:1px;top:241.2px;font-size:10px;line-height:11px;height:11px;color:#cdcdcd;">5</div><div style="left:1px;top:249.8px;font-size:10px;line-height:11px;height:11px;color:#cdcdcd;">0</div><div style="left:0;top:263.1px;width:16px;height:1px;background:#6e6e6e;"></div><div style="left:11.0px;top:266.4px;width:5.5px;height:1px;background:#595959;"></div><div style="left:11.0px;top:269.8px;width:5.5px;height:1px;background:#595959;"></div><div style="left:11.0px;top:273.1px;width:5.5px;height:1px;background:#595959;"></div><div style="left:11.0px;top:276.4px;width:5.5px;height:1px;background:#595959;"></div><div style="left:9.5px;top:279.8px;width:7px;height:1px;background:#595959;"></div><div style="left:11.0px;top:283.1px;width:5.5px;height:1px;background:#595959;"></div><div style="left:11.0px;top:286.4px;width:5.5px;height:1px;background:#595959;"></div><div style="left:11.0px;top:289.8px;width:5.5px;height:1px;background:#595959;"></div><div style="left:11.0px;top:293.1px;width:5.5px;height:1px;background:#595959;"></div><div style="left:1px;top:265.9px;font-size:10px;line-height:11px;height:11px;color:#cdcdcd;">3</div><div style="left:1px;top:274.5px;font-size:10px;line-height:11px;height:11px;color:#cdcdcd;">0</div><div style="left:1px;top:283.1px;font-size:10px;line-height:11px;height:11px;color:#cdcdcd;">0</div><div style="left:0;top:296.5px;width:16px;height:1px;background:#6e6e6e;"></div><div style="left:11.0px;top:299.8px;width:5.5px;height:1px;background:#595959;"></div><div style="left:11.0px;top:303.1px;width:5.5px;height:1px;background:#595959;"></div><div style="left:11.0px;top:306.5px;width:5.5px;height:1px;background:#595959;"></div><div style="left:11.0px;top:309.8px;width:5.5px;height:1px;background:#595959;"></div><div style="left:9.5px;top:313.1px;width:7px;height:1px;background:#595959;"></div><div style="left:11.0px;top:316.5px;width:5.5px;height:1px;background:#595959;"></div><div style="left:11.0px;top:319.8px;width:5.5px;height:1px;background:#595959;"></div><div style="left:11.0px;top:323.1px;width:5.5px;height:1px;background:#595959;"></div><div style="left:11.0px;top:326.5px;width:5.5px;height:1px;background:#595959;"></div><div style="left:1px;top:299.3px;font-size:10px;line-height:11px;height:11px;color:#cdcdcd;">3</div><div style="left:1px;top:307.9px;font-size:10px;line-height:11px;height:11px;color:#cdcdcd;">5</div><div style="left:1px;top:316.5px;font-size:10px;line-height:11px;height:11px;color:#cdcdcd;">0</div><div style="left:0;top:329.8px;width:16px;height:1px;background:#6e6e6e;"></div><div style="left:11.0px;top:333.1px;width:5.5px;height:1px;background:#595959;"></div><div style="left:11.0px;top:336.5px;width:5.5px;height:1px;background:#595959;"></div><div style="left:11.0px;top:339.8px;width:5.5px;height:1px;background:#595959;"></div><div style="left:11.0px;top:343.1px;width:5.5px;height:1px;background:#595959;"></div><div style="left:9.5px;top:346.5px;width:7px;height:1px;background:#595959;"></div><div style="left:11.0px;top:349.8px;width:5.5px;height:1px;background:#595959;"></div><div style="left:11.0px;top:353.1px;width:5.5px;height:1px;background:#595959;"></div><div style="left:11.0px;top:356.5px;width:5.5px;height:1px;background:#595959;"></div><div style="left:11.0px;top:359.8px;width:5.5px;height:1px;background:#595959;"></div><div style="left:1px;top:332.6px;font-size:10px;line-height:11px;height:11px;color:#cdcdcd;">4</div><div style="left:1px;top:341.2px;font-size:10px;line-height:11px;height:11px;color:#cdcdcd;">0</div><div style="left:1px;top:349.8px;font-size:10px;line-height:11px;height:11px;color:#cdcdcd;">0</div><div style="left:0;top:363.2px;width:16px;height:1px;background:#6e6e6e;"></div><div style="left:11.0px;top:366.5px;width:5.5px;height:1px;background:#595959;"></div><div style="left:11.0px;top:369.8px;width:5.5px;height:1px;background:#595959;"></div><div style="left:11.0px;top:373.2px;width:5.5px;height:1px;background:#595959;"></div><div style="left:11.0px;top:376.5px;width:5.5px;height:1px;background:#595959;"></div><div style="left:9.5px;top:379.8px;width:7px;height:1px;background:#595959;"></div><div style="left:11.0px;top:383.2px;width:5.5px;height:1px;background:#595959;"></div><div style="left:11.0px;top:386.5px;width:5.5px;height:1px;background:#595959;"></div><div style="left:11.0px;top:389.8px;width:5.5px;height:1px;background:#595959;"></div><div style="left:11.0px;top:393.2px;width:5.5px;height:1px;background:#595959;"></div><div style="left:1px;top:366.0px;font-size:10px;line-height:11px;height:11px;color:#cdcdcd;">4</div><div style="left:1px;top:374.6px;font-size:10px;line-height:11px;height:11px;color:#cdcdcd;">5</div><div style="left:1px;top:383.2px;font-size:10px;line-height:11px;height:11px;color:#cdcdcd;">0</div><div style="left:0;top:396.5px;width:16px;height:1px;background:#6e6e6e;"></div><div style="left:11.0px;top:399.8px;width:5.5px;height:1px;background:#595959;"></div><div style="left:11.0px;top:403.2px;width:5.5px;height:1px;background:#595959;"></div><div style="left:11.0px;top:406.5px;width:5.5px;height:1px;background:#595959;"></div><div style="left:11.0px;top:409.8px;width:5.5px;height:1px;background:#595959;"></div><div style="left:9.5px;top:413.2px;width:7px;height:1px;background:#595959;"></div><div style="left:11.0px;top:416.5px;width:5.5px;height:1px;background:#595959;"></div><div style="left:11.0px;top:419.8px;width:5.5px;height:1px;background:#595959;"></div><div style="left:11.0px;top:423.2px;width:5.5px;height:1px;background:#595959;"></div><div style="left:11.0px;top:426.5px;width:5.5px;height:1px;background:#595959;"></div><div style="left:1px;top:399.3px;font-size:10px;line-height:11px;height:11px;color:#cdcdcd;">5</div><div style="left:1px;top:407.9px;font-size:10px;line-height:11px;height:11px;color:#cdcdcd;">0</div><div style="left:1px;top:416.5px;font-size:10px;line-height:11px;height:11px;color:#cdcdcd;">0</div><div style="left:0;top:429.9px;width:16px;height:1px;background:#6e6e6e;"></div><div style="left:11.0px;top:433.2px;width:5.5px;height:1px;background:#595959;"></div><div style="left:11.0px;top:436.5px;width:5.5px;height:1px;background:#595959;"></div><div style="left:11.0px;top:439.9px;width:5.5px;height:1px;background:#595959;"></div><div style="left:11.0px;top:443.2px;width:5.5px;height:1px;background:#595959;"></div><div style="left:9.5px;top:446.5px;width:7px;height:1px;background:#595959;"></div><div style="left:11.0px;top:449.9px;width:5.5px;height:1px;background:#595959;"></div><div style="left:11.0px;top:453.2px;width:5.5px;height:1px;background:#595959;"></div><div style="left:11.0px;top:456.5px;width:5.5px;height:1px;background:#595959;"></div><div style="left:1px;top:432.7px;font-size:10px;line-height:11px;height:11px;color:#cdcdcd;">5</div><div style="left:1px;top:441.3px;font-size:10px;line-height:11px;height:11px;color:#cdcdcd;">5</div><div style="left:1px;top:449.9px;font-size:10px;line-height:11px;height:11px;color:#cdcdcd;">0</div></div><div style="left:78px;top:95px;width:16px;height:17px;background:#484848;border-right:1px dotted #5e5e5e;border-bottom:1px dotted #5e5e5e;"></div><div style="left:224.7px;top:96px;width:1px;height:9.5px;background:#e8e8e8;"></div><div style="left:78px;top:123.2px;width:10px;height:1px;background:#e8e8e8;"></div><div style="left:117px;top:175px;width:400px;height:333.5px;background:#fff;overflow:hidden;"><div style="left:146.7px;top:-49.6px;width:164.6px;height:164.6px;border-radius:50%;background:linear-gradient(180deg,#10fdfa,#b0fdaa);"></div><div style="left:154.2px;top:113.0px;width:138.0px;height:138.0px;border-radius:50%;background:linear-gradient(135deg,#10fdfa,#b0fdaa);"></div><div style="left:14.5px;top:30.5px;width:172.0px;height:172.0px;border-radius:50%;background:linear-gradient(180deg,#10fdfa,#b0fdaa);"></div><div style="left:140.0px;top:205.5px;width:165.0px;height:165.0px;border-radius:50%;background:linear-gradient(180deg,#00e8b4,#0878e8);"></div><div style="left:8.6px;top:190.0px;width:164.8px;height:164.8px;border-radius:50%;background:linear-gradient(180deg,#00e8b4,#0878e8);"></div></div><svg style="left:430px;top:445px;" width="110" height="85" viewBox="430 445 110 85"><path d="M440.1 452.4 L458.3 456.2 L456 459.6 L528.6 518.8 L527.7 519.8 L451.2 464.6 L448.6 467.3 Z" fill="#f5302f"/></svg><div style="left:78px;top:570px;width:232px;height:16px;background:#535353;"></div><div style="left:78px;top:570px;width:49px;height:16px;background:#4c4c4c;"></div><div class="lb" style="left:81.5px;top:570px;height:16px;line-height:16px;font-size:12px;color:#e0e0e0;letter-spacing:-0.25px;"><span>66.67%</span></div><div class="lb" style="left:161.5px;top:570px;height:16px;line-height:16px;font-size:12px;color:#e0e0e0;letter-spacing:-0.1px;"><span class="cj" style="width:24px;letter-spacing:0;">文档</span><span style="transform:scaleX(0.955);transform-origin:0 50%;">:878.9K/764.8K</span></div><svg style="left:299px;top:573px;" width="6" height="10" viewBox="0 0 6 10"><path d="M1 0.8 L5 5 L1 9.2" stroke="#bdbdbd" stroke-width="1.2" fill="none"/></svg><div style="left:557px;top:67px;width:73px;height:12px;background:#404040;"></div><svg style="left:617.2px;top:69.8px;" width="8" height="6" viewBox="0 0 8 6"><path d="M3 0.6 L0.8 2.8 L3 5 M6.6 0.6 L4.4 2.8 L6.6 5" stroke="#d8d8d8" stroke-width="1.2" fill="none"/></svg><div style="left:584px;top:82px;width:22px;height:4px;background:repeating-linear-gradient(90deg,#4b4b4b 0 1px,#575757 1px 2px);"></div><div style="left:557px;top:370.3px;width:73px;height:1.6px;background:#404040;"></div><div style="left:584px;top:375px;width:18px;height:3px;background:repeating-linear-gradient(90deg,#4b4b4b 0 1px,#575757 1px 2px);"></div><div style="left:557px;top:439.3px;width:73px;height:1.6px;background:#404040;"></div><div class="lb" style="left:593.6px;top:93.5px;height:17px;line-height:17px;font-size:11.3px;color:#ececec;"><span class="cj" style="width:11.3px;">历</span><span>...</span></div><div class="lb" style="left:593.6px;top:121.5px;height:17px;line-height:17px;font-size:11.3px;color:#ececec;"><span class="cj" style="width:22.6px;">字形</span></div><div class="lb" style="left:593.6px;top:149.5px;height:17px;line-height:17px;font-size:11.3px;color:#ececec;"><span class="cj" style="width:22.6px;">样式</span></div><div class="lb" style="left:593.6px;top:177.5px;height:17px;line-height:17px;font-size:11.3px;color:#ececec;"><span class="cj" style="width:22.6px;">属性</span></div><div class="lb" style="left:593.6px;top:205.5px;height:17px;line-height:17px;font-size:11.3px;color:#ececec;"><span class="cj" style="width:22.6px;">颜色</span></div><div class="lb" style="left:593.6px;top:233.5px;height:17px;line-height:17px;font-size:11.3px;color:#ececec;"><span class="cj" style="width:22.6px;">色板</span></div><div class="lb" style="left:593.6px;top:261.5px;height:17px;line-height:17px;font-size:11.3px;color:#ececec;"><span class="cj" style="width:22.6px;">字符</span></div><div class="lb" style="left:593.6px;top:289.5px;height:17px;line-height:17px;font-size:11.3px;color:#ececec;"><span class="cj" style="width:22.6px;">段落</span></div><div class="lb" style="left:593.6px;top:317.5px;height:17px;line-height:17px;font-size:11.3px;color:#ececec;"><span class="cj" style="width:22.6px;">渐变</span></div><div class="lb" style="left:593.6px;top:345.5px;height:17px;line-height:17px;font-size:11.3px;color:#ececec;"><span class="cj" style="width:22.6px;">图案</span></div><div class="lb" style="left:593.6px;top:386.5px;height:17px;line-height:17px;font-size:11.3px;color:#ececec;"><span class="cj" style="width:22.6px;">通道</span></div><div class="lb" style="left:593.6px;top:414.7px;height:17px;line-height:17px;font-size:11.3px;color:#ececec;"><span class="cj" style="width:22.6px;">路径</span></div><svg style="left:557px;top:88px;" width="73" height="350" viewBox="557 88 73 350"><rect x="569.6" y="94.2" width="3.6" height="3.2" fill="none" stroke="#dcdcdc" stroke-width="1.1"/><rect x="569.6" y="99.6" width="3.6" height="3.2" fill="none" stroke="#dcdcdc" stroke-width="1.1"/><rect x="569" y="104.8" width="4.8" height="4.6" fill="#dcdcdc"/><path d="M579.6 95.4 C583.4 97.6 583.2 104.4 578.6 108.8" fill="none" stroke="#dcdcdc" stroke-width="2"/><path d="M576.2 95 L582 93.4 L580.4 98.8 Z" fill="#dcdcdc"/><text x="569" y="136" font-family="Liberation Serif" font-style="italic" font-weight="bold" font-size="19" fill="#dcdcdc" textLength="14" lengthAdjust="spacingAndGlyphs">A</text><rect x="569" y="150.2" width="14.4" height="11.8" fill="#808080"/><text x="566" y="164.4" font-family="Liberation Sans" font-style="italic" font-size="15" fill="#ececec" textLength="13" lengthAdjust="spacingAndGlyphs">fx</text><path d="M573 177.4 L577.2 179.2 L577.2 184.4 L573 186.4 L568.8 184.4 L568.8 179.2 Z M568.8 179.2 L573 181.2 L577.2 179.2 M573 181.2 L573 186.4" fill="none" stroke="#dcdcdc" stroke-width="1"/><rect x="579" y="177.6" width="4.2" height="3.4" fill="#dcdcdc"/><rect x="579" y="183" width="4.2" height="3.4" fill="#dcdcdc"/><path d="M580 180 L582.2 178.6" stroke="#555" stroke-width="0.8"/><rect x="580.2" y="184" width="1.8" height="1.4" fill="#555"/><rect x="568.5" y="188.6" width="14.4" height="3.6" fill="none" stroke="#dcdcdc" stroke-width="1"/><rect x="580" y="189.4" width="2.4" height="2" fill="#dcdcdc"/><path d="M576.6 207 C581.6 207 585.2 209.6 585.2 212.8 C585.2 215 583.6 215.6 581.8 215.4 C580.4 215.3 579.6 216 580 217.2 C580.4 218.6 579.4 219.8 576.4 219.8 C571.2 219.8 567 217 567 213.4 C567 209.8 571.2 207 576.6 207 Z" fill="#dcdcdc"/><circle cx="571" cy="213.6" r="1.2" fill="#505050"/><circle cx="574" cy="210" r="1.2" fill="#505050"/><circle cx="578.6" cy="209.4" r="1.2" fill="#505050"/><circle cx="582.2" cy="211.6" r="1.2" fill="#505050"/><circle cx="574.2" cy="216.8" r="1.2" fill="#505050"/><rect x="567.6" y="235.1" width="15.6" height="12.6" fill="#dcdcdc"/><rect x="568.7" y="236.2" width="3.6" height="2.7" fill="#8e8e8e"/><rect x="573.6" y="236.2" width="3.6" height="2.7" fill="#8e8e8e"/><rect x="578.5" y="236.2" width="3.6" height="2.7" fill="#8e8e8e"/><rect x="568.7" y="240.1" width="3.6" height="2.7" fill="#3c3c3c"/><rect x="573.6" y="240.1" width="3.6" height="2.7" fill="#3c3c3c"/><rect x="578.5" y="240.1" width="3.6" height="2.7" fill="#3c3c3c"/><rect x="568.7" y="244.0" width="3.6" height="2.7" fill="#3c3c3c"/><rect x="573.6" y="244.0" width="3.6" height="2.7" fill="#3c3c3c"/><rect x="578.5" y="244.0" width="3.6" height="2.7" fill="#3c3c3c"/><text x="569" y="275.2" font-family="Liberation Sans" font-size="15.6" fill="#dcdcdc" textLength="11.4" lengthAdjust="spacingAndGlyphs">A</text><rect x="581.9" y="257.8" width="1.1" height="19.6" fill="#dcdcdc"/><path d="M575 290 L582.6 290 L582.6 291.4 L581.4 291.4 L581.4 305.2 L580 305.2 L580 291.4 L578.4 291.4 L578.4 305.2 L577 305.2 L577 298.2 L575 298.2 C572 298.2 570 296.4 570 294.1 C570 291.8 572 290 575 290 Z" fill="#dcdcdc"/><defs><linearGradient id="gp" x1="0" x2="1" y1="0" y2="0"><stop offset="0" stop-color="#585858"/><stop offset="1" stop-color="#d0d0d0"/></linearGradient></defs><rect x="567.7" y="318.8" width="15" height="12.4" fill="url(#gp)" stroke="#dcdcdc" stroke-width="1.2"/><rect x="567.2" y="347.2" width="16" height="12.4" fill="#dcdcdc"/><rect x="569.2" y="349" width="3" height="1.2" fill="#4a4a4a"/><rect x="573.8" y="349" width="3" height="1.2" fill="#4a4a4a"/><rect x="578.4" y="349" width="3" height="1.2" fill="#4a4a4a"/><rect x="571.6" y="350.8" width="1.2" height="3" fill="#4a4a4a"/><rect x="578.6" y="350.8" width="1.2" height="3" fill="#4a4a4a"/><rect x="569" y="354.6" width="3" height="1.2" fill="#4a4a4a"/><rect x="573.6" y="352.8" width="3.2" height="1.2" fill="#4a4a4a"/><rect x="578.6" y="354.6" width="3" height="1.2" fill="#4a4a4a"/><rect x="575" y="355" width="1.2" height="3" fill="#4a4a4a"/><rect x="570.4" y="356.6" width="1.2" height="2.2" fill="#4a4a4a"/><rect x="572.6" y="357.6" width="2" height="1.1" fill="#4a4a4a"/><rect x="579.4" y="357" width="2.4" height="1.1" fill="#4a4a4a"/><circle cx="574.8" cy="390.6" r="5" fill="#9c9c9c"/><circle cx="571.2" cy="396.8" r="5" fill="#dcdcdc" fill-opacity="0.92"/><circle cx="578.6" cy="396.8" r="5" fill="#dcdcdc" fill-opacity="0.92"/><path d="M574.9 393.2 C576.2 394.6 576.4 396.6 574.9 398.6 C573.4 396.6 573.6 394.6 574.9 393.2 Z" fill="#6a6a6a"/><path d="M566.4 417.6 L584.2 417.6" stroke="#dcdcdc" stroke-width="1"/><rect x="565.1" y="416.3" width="2.6" height="2.6" fill="#dcdcdc"/><rect x="574.0" y="416.3" width="2.6" height="2.6" fill="#dcdcdc"/><rect x="582.9000000000001" y="416.3" width="2.6" height="2.6" fill="#dcdcdc"/><path d="M572.6 418 C570 420.4 568.8 423.4 568.8 426.4 M578 418 C580.6 420.4 581.8 423.4 581.8 426.4" fill="none" stroke="#dcdcdc" stroke-width="1"/><rect x="567.1999999999999" y="426.4" width="3.2" height="3.2" fill="#535353" stroke="#dcdcdc" stroke-width="1"/><rect x="580.1999999999999" y="426.4" width="3.2" height="3.2" fill="#535353" stroke="#dcdcdc" stroke-width="1"/></svg></div></body></html>
